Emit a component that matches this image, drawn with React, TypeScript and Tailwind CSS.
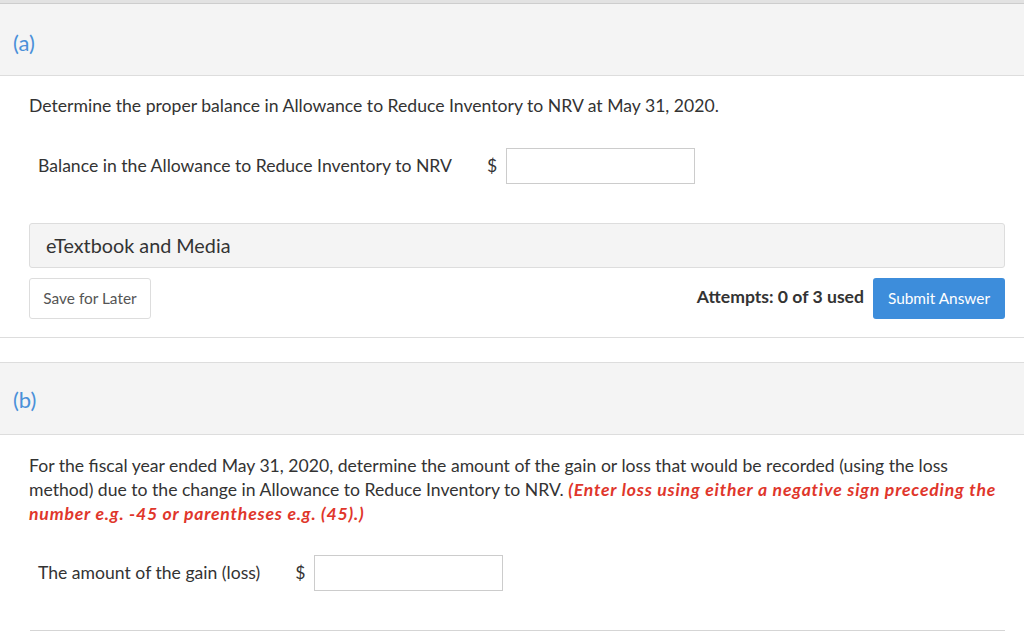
import React from "react";

export default function App() {
  return (
    <div className="w-[1024px] h-[631px] overflow-hidden bg-white text-[#333] font-['Lato','Liberation_Sans',sans-serif]">
      <div className="h-[3px] bg-[#e2e2e2]" />
      <div className="h-[1px] bg-[#cdcdcd]" />
      {/* Section (a) */}
      <div className="border-b border-[#dddddd]">
        <div className="h-[72px] bg-[#f4f4f4] border-b border-[#dddddd] flex items-center pl-[13px] pt-[5px]">
          <span className="text-[22px] text-[#4a90d9]">(a)</span>
        </div>
        <div className="pl-[29px] pr-[19px] pt-[18px] pb-[18px]">
          <p className="text-[17.6px] leading-[24px]">
            Determine the proper balance in Allowance to Reduce Inventory to NRV at May 31, 2020.
          </p>
          <div className="flex items-center mt-[30px] pl-[9px]">
            <span className="text-[17.6px] leading-[24px]">Balance in the Allowance to Reduce Inventory to NRV</span>
            <span className="text-[17.6px] ml-[35px] mr-[9px]">$</span>
            <div className="w-[189px] h-[36px] border border-[#cccccc] bg-white" />
          </div>
          <div className="mt-[39px] h-[45px] bg-[#f4f4f4] border border-[#dddddd] rounded-[3px] flex items-center px-[16px]">
            <span className="text-[19.8px]">eTextbook and Media</span>
          </div>
          <div className="mt-[10px] flex items-center">
            <div className="w-[122px] h-[41px] border border-[#dddddd] rounded-[3px] flex items-center justify-center text-[15.4px] text-[#555]">
              Save for Later
            </div>
            <div className="flex-1" />
            <span className="text-[17.6px] font-bold mr-[9px] mb-[2px]">Attempts: 0 of 3 used</span>
            <div className="w-[132px] h-[41px] bg-[#3d8ddb] rounded-[3px] flex items-center justify-center text-[15.4px] text-white">
              Submit Answer
            </div>
          </div>
        </div>
      </div>
      {/* Section (b) */}
      <div className="mt-[24px] h-[73px] bg-[#f4f4f4] border-y border-[#dddddd] flex items-center pl-[13px] pt-[2px]">
        <span className="text-[22px] text-[#4a90d9]">(b)</span>
      </div>
      <div className="pl-[29px] pr-[19px] pt-[19px]">
        <p className="text-[17.6px] leading-[24px]">
          For the fiscal year ended May 31, 2020, determine the amount of the gain or loss that would be recorded (using the loss method) due to the change in Allowance to Reduce Inventory to NRV.{" "}
          <span className="text-[#e0362b] italic font-bold tracking-[0.8px]">
            (Enter loss using either a negative sign preceding the number e.g. -45 or parentheses e.g. (45).)
          </span>
        </p>
        <div className="flex items-center mt-[29px] pl-[9px]">
          <span className="text-[17.6px] leading-[24px]">The amount of the gain (loss)</span>
          <span className="text-[17.6px] ml-[35px] mr-[9px]">$</span>
          <div className="w-[189px] h-[36px] border border-[#cccccc] bg-white" />
        </div>
        <div className="mt-[39px] ml-[1px] border-b border-[#d5d5d5]" />
      </div>
    </div>
  );
}
